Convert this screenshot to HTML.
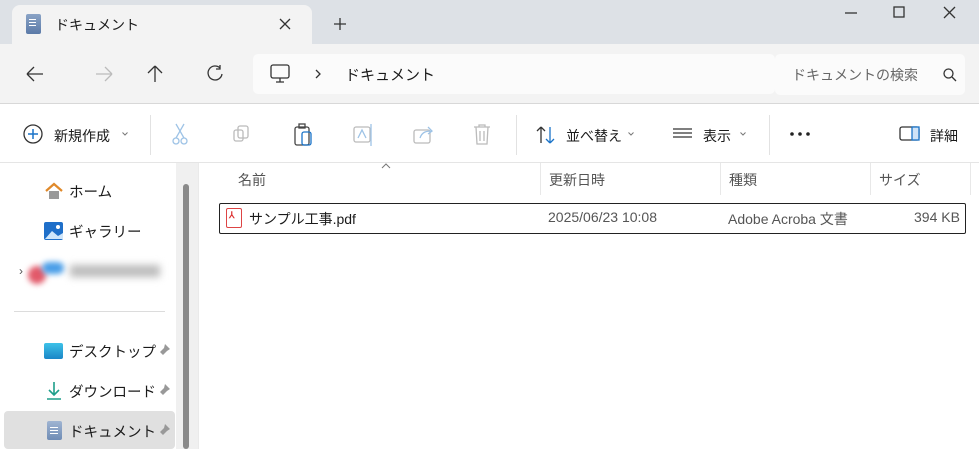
<!DOCTYPE html>
<html><head><meta charset="utf-8"><style>
*{margin:0;padding:0;box-sizing:border-box}
body{width:979px;height:449px;overflow:hidden;position:relative;background:#fff;font-family:"Liberation Sans","Noto Sans CJK JP",sans-serif;font-size:14px;color:#1a1a1a}
.a{position:absolute}
.ic{stroke:#333;fill:none;stroke-width:1.3}
.sb{font-size:14.5px}
</style></head><body>
<div class="a" style="left:0;top:0;width:979px;height:44px;background:#dde1e6"></div>
<div class="a" style="left:12px;top:5px;width:300px;height:40px;background:#f3f3f3;border-radius:8px 8px 0 0"></div>
<div class="a" style="left:26px;top:14px;width:15px;height:20px;background:linear-gradient(#8aa3c6,#5b7aa8);border-radius:2px"></div>
<div class="a" style="left:29px;top:19px;width:7px;height:1px;background:#fff;box-shadow:0 3px #fff,0 6px #fff"></div>
<div class="a" style="left:55px;top:15px;font-size:14px">ドキュメント</div>
<svg class="a" style="left:278px;top:17px" width="14" height="14"><path d="M2 2L12 12M12 2L2 12" class="ic"/></svg>
<svg class="a" style="left:333px;top:17px" width="14" height="14"><path d="M7 1V13M1 7H13" class="ic"/></svg>
<svg class="a" style="left:836px;top:5px" width="140" height="16"><path d="M9 8H21" class="ic"/><rect x="58" y="2" width="10" height="10" class="ic"/><path d="M108 2L119 13M119 2L108 13" class="ic"/></svg>
<div class="a" style="left:0;top:44px;width:979px;height:60px;background:#f3f3f3;border-bottom:1px solid #d8d8d8"></div>
<svg class="a" style="left:24px;top:64px" width="210" height="20"><path d="M3 10H19M3 10L10 3M3 10L10 17" class="ic"/><path d="M72 10H88M88 10L81 3M88 10L81 17" class="ic" style="stroke:#bbb"/><path d="M131 2V18M131 2L124 9M131 2L138 9" class="ic"/><path d="M196 4A7 7 0 1 0 198 10M196 1V5H192" class="ic"/></svg>
<div class="a" style="left:253px;top:54px;width:522px;height:40px;background:#fbfbfb;border-radius:5px"></div>
<svg class="a" style="left:270px;top:63px" width="60" height="22"><rect x="1" y="2" width="18" height="13" rx="2" class="ic"/><path d="M6 19H14M10 15V19" class="ic"/><path d="M46 7L50 11L46 15" class="ic"/></svg>
<div class="a" style="left:345px;top:64px;font-size:15px">ドキュメント</div>
<div class="a" style="left:775px;top:54px;width:190px;height:41px;background:#fbfbfb;border-radius:5px"></div>
<div class="a" style="left:792px;top:65px;font-size:14px;color:#666">ドキュメントの検索</div>
<svg class="a" style="left:942px;top:67px" width="16" height="16"><circle cx="6.5" cy="6.5" r="4.5" class="ic"/><path d="M10 10L14 14" class="ic"/></svg>
<!-- toolbar -->
<svg class="a" style="left:22px;top:123px" width="22" height="22"><circle cx="11" cy="11" r="9" class="ic"/><path d="M11 6V16M6 11H16" stroke="#1a73c8" stroke-width="1.5"/></svg>
<div class="a" style="left:54px;top:126px">新規作成</div>
<svg class="a" style="left:120px;top:130px" width="10" height="8"><path d="M2.5 2.5L5 5L7.5 2.5" stroke="#777" fill="none" stroke-width="1"/></svg>
<div class="a" style="left:150px;top:115px;width:1px;height:40px;background:#e2e2e2"></div>
<svg class="a" style="left:170px;top:122px" width="330" height="26" stroke-width="1.3" fill="none">
<path d="M6 2L14 16M14 2L6 16" stroke="#9ec3e6"/><circle cx="6" cy="19" r="3" stroke="#9ec3e6"/><circle cx="14" cy="19" r="3" stroke="#9ec3e6"/>
<rect x="68" y="4" width="10" height="12" rx="2" stroke="#bbb"/><rect x="64" y="8" width="9" height="11" rx="2" stroke="#bbb"/>
<rect x="125" y="5" width="14" height="18" rx="2" stroke="#444"/><rect x="129" y="2" width="6" height="4" stroke="#444"/><rect x="132" y="10" width="9" height="13" rx="2" stroke="#1a73c8"/>
<rect x="184" y="5" width="16" height="15" rx="2" stroke="#bbb"/><path d="M201 2V24M188 16L192 8L196 16" stroke="#9ec3e6"/>
<rect x="244" y="8" width="16" height="13" rx="2" stroke="#bbb"/><path d="M250 16C252 10 256 9 262 9M258 5L262 9L258 12" stroke="#9ec3e6"/>
<path d="M304 5H320M309 5V3H315V5M306 5L307 22H317L318 5M310 9V19M314 9V19" stroke="#bbb"/>
</svg>
<div class="a" style="left:516px;top:115px;width:1px;height:40px;background:#e2e2e2"></div>
<svg class="a" style="left:535px;top:124px" width="22" height="22"><path d="M6 19V3M6 3L2 7M6 3L10 7" class="ic"/><path d="M15 3V19M15 19L11 15M15 19L19 15" stroke="#1a73c8" stroke-width="1.3" fill="none"/></svg>
<div class="a" style="left:566px;top:126px">並べ替え</div>
<svg class="a" style="left:626px;top:130px" width="10" height="8"><path d="M2.5 2.5L5 5L7.5 2.5" stroke="#777" fill="none" stroke-width="1"/></svg>
<svg class="a" style="left:672px;top:127px" width="22" height="14"><path d="M1 2H20M1 6H20M1 10H20" class="ic"/></svg>
<div class="a" style="left:703px;top:126px">表示</div>
<svg class="a" style="left:738px;top:130px" width="10" height="8"><path d="M2.5 2.5L5 5L7.5 2.5" stroke="#777" fill="none" stroke-width="1"/></svg>
<div class="a" style="left:769px;top:115px;width:1px;height:40px;background:#e2e2e2"></div>
<svg class="a" style="left:789px;top:131px" width="24" height="6"><circle cx="3" cy="3" r="1.8" fill="#222"/><circle cx="11" cy="3" r="1.8" fill="#222"/><circle cx="19" cy="3" r="1.8" fill="#222"/></svg>
<svg class="a" style="left:899px;top:126px" width="22" height="16"><rect x="1" y="1" width="19" height="13" rx="2" class="ic"/><rect x="13" y="1" width="7" height="13" fill="#cfe3f7" stroke="#1a73c8" stroke-width="1.3"/></svg>
<div class="a" style="left:930px;top:126px">詳細</div>
<div class="a" style="left:0;top:162px;width:979px;height:1px;background:#e5e5e5"></div>
<!-- sidebar -->
<div class="a" style="left:176px;top:163px;width:22px;height:286px;background:#f0f0f0"></div>
<div class="a" style="left:183px;top:184px;width:6px;height:265px;background:#8a8a8a;border-radius:3px"></div>
<div class="a" style="left:198px;top:163px;width:1px;height:286px;background:#eaeaea"></div>
<svg class="a" style="left:44px;top:182px" width="20" height="18"><path d="M2 9L10 2L18 9" stroke="#e0892a" stroke-width="2.2" fill="none"/><path d="M5 9V17H15V9" fill="#999"/></svg>
<div class="a sb" style="left:69px;top:181px">ホーム</div>
<svg class="a" style="left:44px;top:221px" width="20" height="20"><rect x="0" y="1" width="19" height="18" rx="2" fill="#1f6fc9"/><path d="M1 18L8 10L14 15L19 12V18Z" fill="#cfe6fb"/><circle cx="14" cy="6" r="2" fill="#fff"/></svg>
<div class="a sb" style="left:69px;top:221px">ギャラリー</div>
<div class="a" style="left:19px;top:264px;font-size:12px;color:#555">›</div>
<div class="a" style="left:28px;top:266px;width:18px;height:18px;border-radius:9px;background:#e25a6a;filter:blur(3px)"></div>
<div class="a" style="left:42px;top:262px;width:22px;height:12px;border-radius:6px;background:#4a9ee8;filter:blur(3px)"></div>
<div class="a" style="left:70px;top:265px;width:90px;height:12px;background:#bbb;filter:blur(4px)"></div>
<div class="a" style="left:14px;top:311px;width:151px;height:1px;background:#dcdcdc"></div>
<div class="a" style="left:44px;top:343px;width:19px;height:16px;background:linear-gradient(#3dc2e8,#1b86c7);border-radius:2px"></div>
<div class="a sb" style="left:69px;top:341px">デスクトップ</div>
<svg class="a" style="left:46px;top:381px" width="16" height="20"><path d="M8 1V14M3 9L8 14L13 9M1 18H15" stroke="#1e9e8a" stroke-width="1.6" fill="none"/></svg>
<div class="a sb" style="left:69px;top:381px">ダウンロード</div>
<div class="a" style="left:4px;top:411px;width:171px;height:38px;background:#e0e0e0;border-radius:4px"></div>
<div class="a" style="left:47px;top:421px;width:15px;height:19px;background:linear-gradient(#9fb4d2,#6f8cb5);border-radius:2px"></div>
<div class="a" style="left:50px;top:427px;width:8px;height:1px;background:#fff;box-shadow:0 3px #fff,0 6px #fff"></div>
<div class="a sb" style="left:69px;top:421px">ドキュメント</div>
<svg class="a" style="left:157px;top:343px" width="14" height="100"><g fill="#999"><path d="M8 1L13 6L10 8L6 12L3 9L7 5Z"/><path d="M8 41L13 46L10 48L6 52L3 49L7 45Z"/><path d="M8 81L13 86L10 88L6 92L3 89L7 85Z"/></g></svg>
<!-- content -->
<svg class="a" style="left:380px;top:162px" width="12" height="8"><path d="M2 6L6 2L10 6" stroke="#777" fill="none"/></svg>
<div class="a" style="left:238px;top:170px;color:#555">名前</div>
<div class="a" style="left:540px;top:163px;width:1px;height:32px;background:#e8e8e8"></div>
<div class="a" style="left:549px;top:170px;color:#555">更新日時</div>
<div class="a" style="left:720px;top:163px;width:1px;height:32px;background:#e8e8e8"></div>
<div class="a" style="left:729px;top:170px;color:#555">種類</div>
<div class="a" style="left:870px;top:163px;width:1px;height:32px;background:#e8e8e8"></div>
<div class="a" style="left:879px;top:170px;color:#555">サイズ</div>
<div class="a" style="left:970px;top:163px;width:1px;height:32px;background:#e8e8e8"></div>
<div class="a" style="left:219px;top:203px;width:747px;height:31px;border:1px solid #222;border-radius:2px"></div>
<div class="a" style="left:226px;top:208px;width:16px;height:20px;border:1px solid #d44;border-radius:2px;background:#fff"></div>
<div class="a" style="left:229px;top:210px;font-size:9px;color:#d33;font-weight:bold">⅄</div>
<div class="a" style="left:249px;top:209px">サンプル工事.pdf</div>
<div class="a" style="left:548px;top:209px;color:#555">2025/06/23 10:08</div>
<div class="a" style="left:728px;top:209px;color:#555">Adobe Acroba 文書</div>
<div class="a" style="left:914px;top:209px;color:#555">394 KB</div>
</body></html>
